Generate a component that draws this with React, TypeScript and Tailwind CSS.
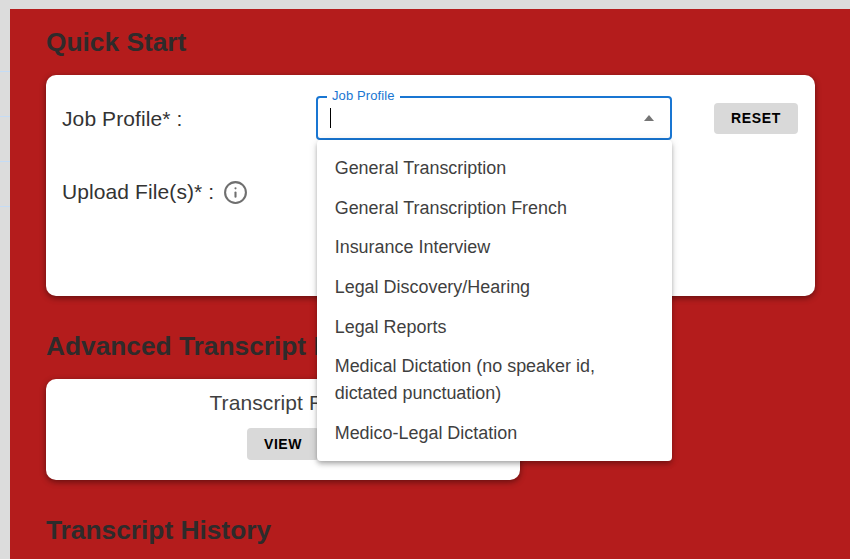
import { Info } from 'lucide-react'

const PROFILES = [
  'General Transcription',
  'General Transcription French',
  'Insurance Interview',
  'Legal Discovery/Hearing',
  'Legal Reports',
  'Medical Dictation (no speaker id, dictated punctuation)',
  'Medico-Legal Dictation',
]

function Heading({ children }: { children: string }) {
  return <h2 className="text-[26.3px] leading-[30px] font-bold text-[#2e2b2b]">{children}</h2>
}

function JobProfileSelect() {
  return (
    <div className="relative w-[356px] h-[44px] rounded border-2 border-[#1976d2]">
      <span className="absolute -top-[9px] left-[9px] bg-white px-[5px] text-[13px] leading-[14px] tracking-[0.1px] text-[#1976d2]">Job Profile</span>
      <div className="absolute left-[12px] top-[10px] w-px h-5 bg-black" />
      <div className="absolute right-[16px] top-[17px] w-0 h-0 border-x-[5.5px] border-x-transparent border-b-[6px] border-b-[#757575]" />
      {/* Menu */}
      <ul className="absolute -left-[1px] top-[42px] z-10 w-[355px] bg-white rounded pt-[8.9px] pb-[8.1px] shadow-[0_2px_4px_-1px_rgba(0,0,0,0.2),0_4px_5px_0_rgba(0,0,0,0.14),0_1px_10px_0_rgba(0,0,0,0.12)]">
        {PROFILES.map(p => (
          <li key={p} className="px-[17.7px] py-[6.3px] text-[17.95px] leading-[27px] text-[#3f3f3f]">{p}</li>
        ))}
      </ul>
    </div>
  )
}

export default function App() {
  return (
    <div className="flex h-[559px] overflow-hidden bg-[#dcdcdc] font-['Liberation_Sans',Arial,sans-serif]">
      {/* faint guide lines in the gray strip */}
      <div className="flex w-[10px] shrink-0 flex-col gap-[44px] pt-[71px]">
        <div className="h-px bg-[#c5dcf5]" />
        <div className="h-px bg-[#c5dcf5]" />
        <div className="h-px bg-[#c5dcf5]" />
        <div className="h-px bg-[#c5dcf5]" />
      </div>

      <div className="mt-[9px] h-[550px] flex-1 bg-[#b41c1c] pl-9 pr-[35px] pt-[18px]">
        <Heading>Quick Start</Heading>

        <div className="mt-[18px] h-[221px] rounded-[10px] bg-white pl-4 pr-[17px] pt-[21px] shadow-[0_2px_6px_rgba(0,0,0,0.45)]">
          <div className="flex items-start">
            <div className="w-[254px] pt-[11px] text-[21px] leading-6 tracking-[0.1px] text-[#333]">Job Profile* :</div>
            <JobProfileSelect />
            <button className="ml-[42px] mt-[7px] w-[84px] h-[31px] rounded bg-[#d9d9d9] pb-[2px] text-sm font-bold tracking-wider text-black">RESET</button>
          </div>
          <div className="mt-[38px] flex items-center gap-[9px] text-[21px] leading-6 tracking-[0.1px] text-[#333]">
            <span>Upload File(s)* :</span>
            <Info size={25} strokeWidth={2} className="mt-[2px] text-[#6f6f6f]" />
          </div>
        </div>

        <div className="mt-[35px]"><Heading>Advanced Transcript Features</Heading></div>

        <div className="mt-[18px] w-[474px] h-[101px] rounded-[10px] bg-white pt-[12px] flex flex-col items-center shadow-[0_2px_6px_rgba(0,0,0,0.45)]">
          <div className="pr-[4px] text-[21px] leading-6 tracking-[0.1px] text-[#3f3f3f]">Transcript Rule</div>
          <button className="mt-[13px] w-[72px] h-8 rounded bg-[#d9d9d9] text-sm font-bold tracking-[0.5px] text-black">VIEW</button>
        </div>

        <div className="mt-[35px]"><Heading>Transcript History</Heading></div>
      </div>
    </div>
  )
}
